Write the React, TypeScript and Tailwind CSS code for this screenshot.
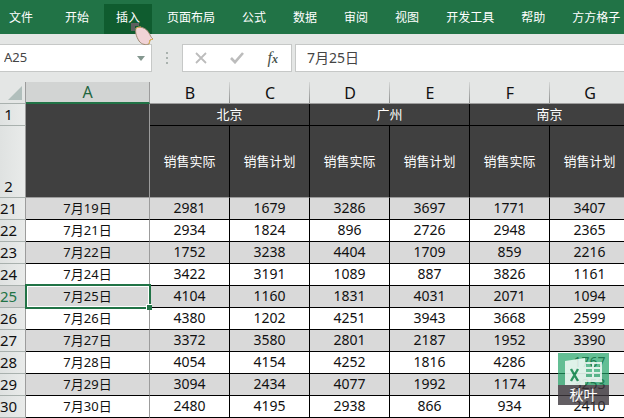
import clsx from "clsx";

const tabs = ["开始", "插入", "页面布局", "公式", "数据", "审阅", "视图", "开发工具", "帮助", "方方格子"];

const columns = ["B", "C", "D", "E", "F", "G"];
const cities = ["北京", "广州", "南京"];

const rows = [
  { n: 21, date: "7月19日", values: [2981, 1679, 3286, 3697, 1771, 3407] },
  { n: 22, date: "7月21日", values: [2934, 1824, 896, 2726, 2948, 2365] },
  { n: 23, date: "7月22日", values: [1752, 3238, 4404, 1709, 859, 2216] },
  { n: 24, date: "7月24日", values: [3422, 3191, 1089, 887, 3826, 1161] },
  { n: 25, date: "7月25日", values: [4104, 1160, 1831, 4031, 2071, 1094] },
  { n: 26, date: "7月26日", values: [4380, 1202, 4251, 3943, 3668, 2599] },
  { n: 27, date: "7月27日", values: [3372, 3580, 2801, 2187, 1952, 3390] },
  { n: 28, date: "7月28日", values: [4054, 4154, 4252, 1816, 4286, 1767] },
  { n: 29, date: "7月29日", values: [3094, 2434, 4077, 1992, 1174, 3253] },
  { n: 30, date: "7月30日", values: [2480, 4195, 2938, 866, 934, 2410] },
];

const SELECTED = 25;

function Ribbon() {
  return (
    <nav className="flex h-[34px] gap-[3px] overflow-hidden bg-[#217346] pt-1 text-[12px] whitespace-nowrap text-white">
      <button className="mr-[5px] shrink-0 pr-3 pb-[2px] pl-[9px]">文件</button>
      {tabs.map((t) => (
        <button key={t} className={clsx("shrink-0 px-3 pb-[2px]", t === "插入" && "bg-[#0f5c2f]")}>
          {t}
        </button>
      ))}
    </nav>
  );
}

function FormulaBar() {
  return (
    <div className="flex items-center py-[10px] text-[#444]">
      <div className="flex h-7 w-[152px] shrink-0 items-center border border-l-0 border-[#c6c8c7] bg-white pr-[6px] pl-1">
        <input aria-label="名称框" defaultValue="A25" className="min-w-0 flex-1 text-[13px] outline-none" />
        <button aria-label="展开名称框">
          <svg width="8" height="5" viewBox="0 0 8 5" fill="#84978f">
            <path d="M0 0h8L4 5z" />
          </svg>
        </button>
      </div>
      <svg className="mx-[14px] shrink-0" width="2" height="12" fill="#a9b2ae">
        <path d="M0 0h2v2H0zM0 5h2v2H0zM0 10h2v2H0z" />
      </svg>
      <div className="flex h-7 w-[110px] shrink-0 items-center justify-between border border-[#c6c8c7] bg-white px-3">
        <button aria-label="取消">
          <svg width="12" height="12" viewBox="0 0 12 12" fill="none" stroke="#bcbcbc" strokeWidth="1.800">
            <path d="M1 1l10 10M11 1L1 11" />
          </svg>
        </button>
        <button aria-label="输入">
          <svg width="14" height="12" viewBox="0 0 14 12" fill="none" stroke="#bcbcbc" strokeWidth="2.6">
            <path d="M1 6l4 4.2L13 1" />
          </svg>
        </button>
        <button
          aria-label="插入函数"
          className="pr-px font-['Liberation_Serif',serif] text-[16px] leading-4 text-[#46524b] italic"
        >
          f<span className="text-[12px] font-bold">x</span>
        </button>
      </div>
      <input
        aria-label="编辑栏"
        defaultValue="7月25日"
        className="ml-[3px] h-7 min-w-0 flex-1 border border-r-0 border-[#c6c8c7] bg-white pb-[2px] pl-[11px] text-[14px] outline-none"
      />
    </div>
  );
}

function RowHeader({ n, className }: { n: number; className?: string }) {
  return (
    <th
      scope="row"
      className={clsx(
        "border-r border-b border-r-[#9c9c9c] border-b-[#a9b1ae] pt-0 pr-2 pb-[2px] pl-0 text-[15px] font-normal",
        n === SELECTED ? "bg-[#d2d4d3] text-[#217346]" : "bg-linear-to-r from-[#dfe2e1] to-[#e9ebea] text-[#111]",
        className,
      )}
    >
      {n}
    </th>
  );
}

function Sheet() {
  return (
    <table className="w-[630px] table-fixed border-separate border-spacing-0 text-center text-[14px] leading-[18px] text-[#111]">
      <colgroup>
        <col className="w-[26px]" />
        <col className="w-[124px]" />
        {columns.map((c) => (
          <col key={c} className="w-20" />
        ))}
      </colgroup>
      <thead>
        <tr className="h-[22px] text-[16px]">
          <td className="border-r border-b border-r-[#9c9c9c] border-b-[#a9b1ae] p-0">
            <svg className="ml-2" width="14" height="14" viewBox="0 0 14 14" fill="#b1bfbc">
              <path d="M14 0v14H0z" />
            </svg>
          </td>
          <th className="border-r border-b-2 border-r-[#9c9c9c] border-b-[#217346] bg-[#d2d4d3] p-0 font-normal text-[#1e6640]">
            A
          </th>
          {columns.map((c) => (
            <th
              key={c}
              className="border-b border-[#9c9c9c] bg-[linear-gradient(to_bottom,#d4d6d5,#8c8e8d)] bg-[length:1px_100%] bg-right bg-no-repeat p-0 font-normal"
            >
              {c}
            </th>
          ))}
        </tr>
        <tr className="h-[22px] text-[13px] text-white">
          <RowHeader n={1} />
          <td rowSpan={2} className="border-r border-b border-[#9c9c9c] bg-[#404040]" />
          {cities.map((c) => (
            <th key={c} colSpan={2} className="border-r border-b border-black bg-[#404040] p-0 pb-[2px] font-normal">
              {c}
            </th>
          ))}
        </tr>
        <tr className="h-[72px] text-[13px] text-white">
          <RowHeader n={2} className="align-bottom" />
          {columns.map((c, i) => (
            <th
              key={c}
              className="border-r border-b border-r-black border-b-[#9c9c9c] bg-[#404040] p-0 pb-[2px] font-normal"
            >
              {i % 2 ? "销售计划" : "销售实际"}
            </th>
          ))}
        </tr>
      </thead>
      <tbody>
        {rows.map(({ n, date, values }) => (
          <tr key={n} className={clsx("h-[22px]", n % 2 ? "bg-[#d9d9d9]" : "bg-white")}>
            <RowHeader n={n} />
            <td className="relative border-r border-b border-r-[#9c9c9c] border-b-black p-0 pb-[2px] text-[13px]">
              {date}
              {n === SELECTED && (
                <span className="absolute -top-[2px] -right-[2px] -bottom-[2px] -left-px z-10 border-2 border-[#217346]">
                  <span className="absolute inset-0 border border-white" />
                  <span className="absolute -right-[3px] -bottom-[3px] size-[6px] border-t border-l border-white bg-[#217346]" />
                </span>
              )}
            </td>
            {values.map((v, i) => (
              <td key={columns[i]} className="border-r border-b border-black p-0 pb-[2px]">
                {v}
              </td>
            ))}
          </tr>
        ))}
      </tbody>
    </table>
  );
}

function Watermark() {
  return (
    <div className="absolute right-[15px] bottom-[13px] z-20 w-[51px]">
      <div className="flex h-8 items-end justify-center bg-[#21a366]/70">
        <svg width="38" height="27" viewBox="0 0 38 27" opacity=".8">
          <path
            d="M20 4h17v20H20zM21 6v3h6V6zM29 6v3h6V6zM21 11v3h6v-3zM29 11v3h6v-3zM21 16v3h6v-3zM29 16v3h6v-3z"
            fill="#fff"
            fillRule="evenodd"
          />
          <path d="M0 3L20 0v27H0z" fill="#fff" />
          <path d="M6 11l7 12M13 11L6 23" stroke="#1f8a55" strokeWidth="2.4" fill="none" />
        </svg>
      </div>
      <div className="h-5 bg-[#3c363c]/80 text-center text-[14px] leading-5 text-white">秋叶</div>
    </div>
  );
}

function Pointer() {
  return (
    <svg className="absolute top-[22px] left-[130px] z-20" width="25" height="24" viewBox="0 0 25 24">
      <path d="M1 1h8v3H5v5H1z" fill="#5f5f5f" />
      <path
        d="M6 6c5-2 10 0 13 5 1.500 2.500 1.500 4 4 6l-3 1-1 4c-3 1-7 1-10-3C6 14 5 10 6 6z"
        fill="#f1d3d6"
        stroke="#a08a72"
        strokeWidth="1"
      />
      <path d="M19 22l1-4 3-1M6 7c1-2 3-2 5-2" fill="none" stroke="#e0b455" strokeWidth="1" />
    </svg>
  );
}

export default function App() {
  return (
    <div className="relative overflow-hidden bg-[#e4e6e5] font-['Noto_Sans','Noto_Sans_CJK_SC',sans-serif]">
      <Ribbon />
      <FormulaBar />
      <Sheet />
      <Watermark />
      <Pointer />
    </div>
  );
}
